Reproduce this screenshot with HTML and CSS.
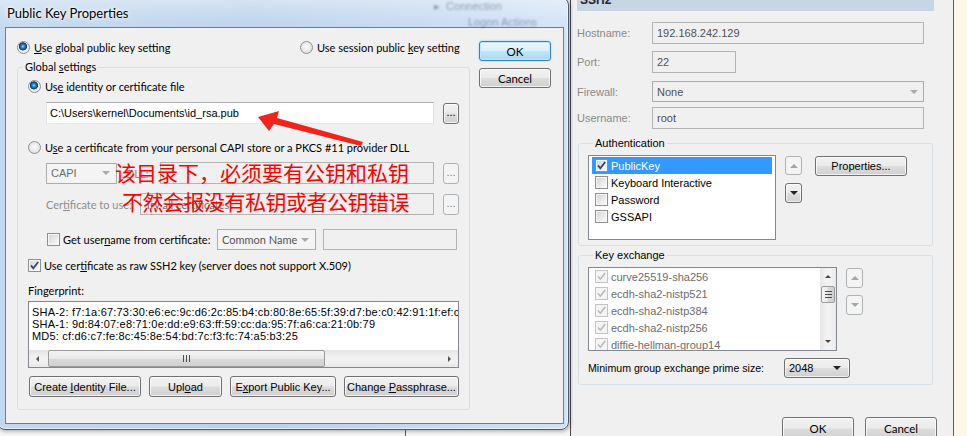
FILE: index.html
```html
<!DOCTYPE html>
<html lang="en">
<head>
<meta charset="utf-8">
<title>Public Key Properties</title>
<link rel="stylesheet" href="styles.css">
</head>
<body>
<div class="desk">
  <div class="backline"></div>

  <section class="bgwin">
    <div class="sechead">SSH2</div>
    <div class="frow r-host"><span class="flabel">Hostname:</span><span class="tf dis w-wide">192.168.242.129</span></div>
    <div class="frow r-port"><span class="flabel">Port:</span><span class="tf dis w-port">22</span></div>
    <div class="frow r-fw"><span class="flabel">Firewall:</span><span class="combo dis w-wide"><span>None</span><i class="tri lt"></i></span></div>
    <div class="frow r-user"><span class="flabel">Username:</span><span class="tf dis w-wide">root</span></div>

    <fieldset class="grp g-auth">
      <legend>Authentication</legend>
      <div class="gbody">
        <ul class="lst l-auth">
          <li class="sel"><span class="cb"><svg viewBox="0 0 11 11"><path d="M2 5.4l2.3 2.8L9.2 2"/></svg></span>PublicKey</li>
          <li><span class="cb"></span>Keyboard Interactive</li>
          <li><span class="cb"></span>Password</li>
          <li><span class="cb"></span>GSSAPI</li>
        </ul>
        <div class="updown ud-auth">
          <span class="ab dis"><i class="tri up"></i></span>
          <span class="ab"><i class="tri"></i></span>
        </div>
        <span class="btn b-props"><span>Properties...</span></span>
      </div>
    </fieldset>

    <fieldset class="grp g-kex">
      <legend>Key exchange</legend>
      <div class="gbody">
        <div class="lst l-kex">
          <ul class="kitems">
            <li><span class="cb dis"><svg viewBox="0 0 11 11"><path d="M2 5.4l2.3 2.8L9.2 2"/></svg></span>curve25519-sha256</li>
            <li><span class="cb dis"><svg viewBox="0 0 11 11"><path d="M2 5.4l2.3 2.8L9.2 2"/></svg></span>ecdh-sha2-nistp521</li>
            <li><span class="cb dis"><svg viewBox="0 0 11 11"><path d="M2 5.4l2.3 2.8L9.2 2"/></svg></span>ecdh-sha2-nistp384</li>
            <li><span class="cb dis"><svg viewBox="0 0 11 11"><path d="M2 5.4l2.3 2.8L9.2 2"/></svg></span>ecdh-sha2-nistp256</li>
            <li><span class="cb dis"><svg viewBox="0 0 11 11"><path d="M2 5.4l2.3 2.8L9.2 2"/></svg></span>diffie-hellman-group14</li>
          </ul>
          <div class="vscroll">
            <span class="varr"><i class="tri up sm"></i></span>
            <span class="vthumb"><i class="grip-h"></i></span>
            <span class="vspace"></span>
            <span class="varr"><i class="tri sm"></i></span>
          </div>
        </div>
        <div class="updown ud-kex">
          <span class="ab dis"><i class="tri up"></i></span>
          <span class="ab dis"><i class="tri"></i></span>
        </div>
      </div>
      <div class="minrow"><span class="minlabel">Minimum group exchange prime size:</span><span class="combo en w-2048"><span>2048</span><i class="tri"></i></span></div>
    </fieldset>

    <div class="winbtns"><span class="btn wb">OK</span><span class="btn wb">Cancel</span></div>
  </section>

  <section class="dlg">
    <div class="behind"><span class="b1">&#9656;&nbsp; Connection</span><span class="b2">Logon Actions</span></div>
    <div class="dtitle">Public Key Properties</div>
    <div class="client">
      <div class="lcol">
        <div class="toprow">
          <label class="opt"><span class="rad on"></span><span><u>U</u>se global public key setting</span></label>
          <label class="opt"><span class="rad"></span><span>Use session public <u>k</u>ey setting</span></label>
        </div>

        <fieldset class="grp gs">
          <legend>Global <u>s</u>ettings</legend>
          <div class="gin">
            <label class="opt r-id"><span class="rad on"></span><span>Us<u>e</u> identity or certificate file</span></label>
            <div class="irow r-file">
              <span class="tf w-file tah">C:\Users\kernel\Documents\id_rsa.pub</span>
              <span class="btn dots">...</span>
            </div>
            <label class="opt r-capi-opt"><span class="rad"></span><span>U<u>s</u>e a certificate from your personal CAPI store or a PKCS #11 provider DLL</span></label>
            <div class="irow r-capi">
              <span class="combo dis w-capi"><span>CAPI</span><i class="tri lt"></i></span>
              <span class="dlabel w-dll">DLL:</span>
              <span class="tf dis w-dllf"></span>
              <span class="btn dots dis">...</span>
            </div>
            <div class="irow r-cert">
              <span class="dlabel w-certl">Cer<u>t</u>ificate to use:</span>
              <span class="tf dis w-certf">Try all certificates</span>
              <span class="btn dots dis">...</span>
            </div>
            <div class="irow r-user2">
              <span class="cb"></span>
              <span class="ulabel">Get user<u>n</u>ame from certificate:</span>
              <span class="combo dis w-cn"><span>Common Name</span><i class="tri lt"></i></span>
              <span class="tf dis w-cnf"></span>
            </div>
            <label class="opt r-raw"><span class="cb"><svg viewBox="0 0 11 11"><path d="M2 5.4l2.3 2.8L9.2 2"/></svg></span><span>Use cer<u>t</u>ificate as raw SSH2 key (server does not support X.509)</span></label>
            <div class="fplabel">Fingerprint:</div>
            <div class="fpbox">
              <div class="fptext tah">
                <div>SHA-2: f7:1a:67:73:30:e6:ec:9c:d6:2c:85:b4:cb:80:8e:65:5f:39:d7:be:c0:42:91:1f:ef:c4:5e:0a:7b</div>
                <div>SHA-1: 9d:84:07:e8:71:0e:dd:e9:63:ff:59:cc:da:95:7f:a6:ca:21:0b:79</div>
                <div>MD5: cf:d6:c7:fe:8c:45:8e:54:bd:7c:f3:fc:74:a5:b3:25</div>
              </div>
              <div class="hscroll">
                <span class="harr"><i class="tri lf"></i></span>
                <span class="hthumb"><i class="grip-v"></i></span>
                <span class="hspace"></span>
                <span class="harr"><i class="tri rt"></i></span>
              </div>
            </div>
            <div class="brow tah">
              <span class="btn b-create"><span>Create <u>I</u>dentity File...</span></span>
              <span class="btn b-upload"><span>Upl<u>o</u>ad</span></span>
              <span class="btn b-export"><span>E<u>x</u>port Public Key...</span></span>
              <span class="btn b-change"><span>Change <u>P</u>assphrase...</span></span>
            </div>
          </div>
        </fieldset>
      </div>

      <div class="rcol">
        <span class="btn def">OK</span>
        <span class="btn">Cancel</span>
      </div>
    </div>
  </section>

  <div class="note">
    <div class="l1">该目录下，必须要有公钥和私钥</div>
    <div class="l2">不然会报没有私钥或者公钥错误</div>
  </div>

  <svg class="arrow" viewBox="0 0 967 436" width="967" height="436">
    <polygon points="258,117 279,111 277,118 363,142 361,146 274,124 269,131" fill="#f2231b"/>
  </svg>
</div>
</body>
</html>
```

FILE: styles.css
```css
* { box-sizing: border-box; margin: 0; padding: 0; }
html, body { width: 967px; height: 436px; overflow: hidden; }
body {
  font-family: "Liberation Sans", Arial, sans-serif;
  font-size: 11px;
  color: #000;
  background: #f6f6f6;
}
ul { list-style: none; }
u { text-decoration: underline; text-underline-offset: 1px; }
label { display: flex; }

.desk {
  position: relative;
  width: 967px;
  height: 436px;
  overflow: hidden;
  background: linear-gradient(90deg, #f6f6f6 0, #f6f6f6 954px, #fdf7e8 954px);
}
.backline { position: absolute; left: 405px; top: 428px; width: 1px; height: 8px; background: #5b5b5b; }

/* ---------- shared controls ---------- */
.tah { font-family: "Liberation Sans", Arial, sans-serif; font-size: 11px; }

.btn {
  display: flex;
  align-items: center;
  justify-content: center;
  border: 1px solid #707070;
  border-radius: 3px;
  background: linear-gradient(180deg, #f2f2f2 0, #ebebeb 48%, #dddddd 52%, #cfcfcf 100%);
  box-shadow: inset 0 0 0 1px rgba(255, 255, 255, .75);
  white-space: nowrap;
  flex: none;
}
.btn.def {
  border-color: #3c7fb1;
  background: linear-gradient(180deg, #eaf6fd 0, #d9f0fc 48%, #bee6fd 52%, #a7d9f5 100%);
  box-shadow: inset 0 0 0 1px #bfe8fb, 0 0 2px #7fc4ef;
}
.btn.dis {
  border-color: #adb2b5;
  background: #f4f4f4;
  box-shadow: none;
  color: #838383;
}

.tf {
  display: flex;
  align-items: center;
  height: 100%;
  padding-left: 4px;
  border: 1px solid #abadb3;
  border-color: #abadb3 #dbdfe6 #e3e9ef #e2e3ea;
  background: #fff;
  white-space: nowrap;
  overflow: hidden;
  flex: none;
}
.tf.dis {
  background: #f0f0f0;
  border: 1px solid #b4b4b4;
  color: #6d6d6d;
}

.combo {
  display: flex;
  align-items: center;
  justify-content: space-between;
  height: 100%;
  padding: 0 6px 0 4px;
  border: 1px solid #acacac;
  background: #f2f2f2;
  color: #555;
  white-space: nowrap;
  flex: none;
}
.combo.en {
  border-color: #707070;
  border-radius: 3px;
  background: linear-gradient(180deg, #f2f2f2 0, #ebebeb 48%, #dddddd 52%, #cfcfcf 100%);
  box-shadow: inset 0 0 0 1px rgba(255, 255, 255, .7);
  color: #000;
  padding: 0 8px 0 4px;
}

.tri {
  display: block;
  width: 0;
  height: 0;
  border-left: 4px solid transparent;
  border-right: 4px solid transparent;
  border-top: 4px solid #222;
}
.tri.up { border-top: 0; border-bottom: 4px solid #3a3a3a; }
.tri.lt { border-top-color: #a8a8a8; }
.tri.sm { border-left-width: 3px; border-right-width: 3px; border-top-width: 3px; }
.tri.sm.up { border-bottom-width: 3px; border-top-width: 0; }
.tri.lf { border: 3px solid transparent; border-left: 0; border-right: 3px solid #555; }
.tri.rt { border: 3px solid transparent; border-right: 0; border-left: 3px solid #555; }

.rad {
  width: 13px;
  height: 13px;
  border-radius: 50%;
  border: 1px solid #8f8f8f;
  background: radial-gradient(circle at 50% 45%, #fbfbfb 0, #e8e8e8 55%, #cdcdcd 100%);
  flex: none;
}
.rad.on {
  background: radial-gradient(circle at 45% 40%, #9edbf8 0, #2d8ad0 1.6px, #124e86 3.2px, #0c3a66 3.8px, #f4f4f4 4.4px, #e2e2e2 100%);
}

.cb {
  width: 13px;
  height: 13px;
  border: 1px solid #8e8f8f;
  background: linear-gradient(135deg, #cfd1d5 0, #ececec 60%, #fbfbfb 100%);
  box-shadow: inset 0 0 0 1px #f7f7f7;
  display: flex;
  align-items: center;
  justify-content: center;
  flex: none;
}
.cb svg { width: 11px; height: 11px; fill: none; stroke: #2c4a78; stroke-width: 1.8; }
.cb.dis { border-color: #c4c4c4; background: #f4f4f4; box-shadow: none; }
.cb.dis svg { stroke: #b3b3b3; stroke-width: 1.4; }

.opt { display: flex; align-items: center; gap: 4px; white-space: nowrap; }

.grp { border: 1px solid #d5dfe5; border-radius: 3px; min-width: 0; }
.grp > legend { margin-left: 5px; padding: 0 2px; height: 14px; line-height: 14px; }

/* ---------- background SecureCRT window ---------- */
.bgwin {
  position: absolute;
  left: 570px;
  top: -10px;
  width: 384px;
  height: 460px;
  background: #f0f0f0;
  border-left: 1px solid #474747;
  border-right: 1px solid #5c5c5c;
  padding-left: 6px;
  display: flex;
  flex-direction: column;
  align-items: flex-start;
}
.sechead {
  width: 357px;
  height: 21px;
  line-height: 21px;
  padding-left: 3px;
  background: #c8d5e2;
  font-weight: bold;
  font-size: 12px;
  color: #1d2a38;
}
.frow { display: flex; align-items: center; }
.flabel { width: 75px; color: #8a8a8a; }
.r-host { margin-top: 11px; height: 22px; }
.r-port { margin-top: 7px; height: 22px; }
.r-fw { margin-top: 8px; height: 21px; }
.r-user { margin-top: 5px; height: 22px; }
.frow .tf.dis { color: #505050; }
.w-wide { width: 272px; }
.w-port { width: 84px; }
.r-fw .combo { background: #f0f0f0; color: #505050; padding-right: 5px; }

.g-auth { margin-top: 7px; margin-left: 1px; width: 355px; padding: 0 0 5px 9px; }
.gbody { display: flex; align-items: flex-start; margin-top: 5px; }
.lst { border: 1px solid #828790; background: #fff; }
.l-auth { width: 188px; height: 85px; padding: 1px 3px 0; }
.l-auth li, .kitems li {
  height: 17px;
  display: flex;
  align-items: center;
  gap: 3px;
  padding-left: 3px;
  white-space: nowrap;
}
.l-auth li.sel { background: #3399ff; color: #fff; }

.updown { margin-left: 9px; margin-top: 1px; display: flex; flex-direction: column; }
.ud-auth { gap: 8px; }
.ud-kex { gap: 7px; }
.ab {
  width: 17px;
  height: 19px;
  display: flex;
  align-items: center;
  justify-content: center;
  border: 1px solid #707070;
  border-radius: 3px;
  background: linear-gradient(180deg, #f2f2f2 0, #ebebeb 48%, #dddddd 52%, #cfcfcf 100%);
  box-shadow: inset 0 0 0 1px rgba(255, 255, 255, .7);
}
.ud-auth .ab + .ab { height: 20px; }
.ud-kex .ab { height: 20px; }
.ab.dis { border-color: #adb2b5; background: #f4f4f4; box-shadow: none; }
.ab.dis .tri.up { border-bottom-color: #a6a6a6; }
.ab.dis .tri { border-top-color: #a6a6a6; }
.b-props { margin-left: 13px; margin-top: 1px; width: 92px; height: 20px; }

.g-kex { margin-top: 2px; margin-left: 1px; width: 355px; padding: 0 0 6px 9px; }
.l-kex { width: 249px; height: 84px; display: flex; overflow: hidden; }
.kitems { flex: 1; overflow: hidden; color: #6d6d6d; }
.kitems li { padding-left: 6px; gap: 3px; }
.vscroll {
  width: 16px;
  display: flex;
  flex-direction: column;
  background: linear-gradient(90deg, #e6e6e6, #f2f2f2 40%, #f2f2f2 70%, #e8e8e8);
}
.varr { height: 17px; display: flex; align-items: center; justify-content: center; flex: none; }
.varr .tri { border-top-color: #444; }
.varr .tri.up { border-bottom-color: #444; }
.vthumb {
  height: 17px;
  margin: 1px 1px 0;
  border: 1px solid #9a9a9a;
  border-radius: 2px;
  background: linear-gradient(90deg, #f3f3f3, #e8e8e8 50%, #d9d9d9 50%, #cfcfcf);
  display: flex;
  align-items: center;
  justify-content: center;
  flex: none;
}
.grip-h {
  display: block;
  width: 7px;
  height: 7px;
  background: repeating-linear-gradient(180deg, #4d4d4d 0, #4d4d4d 1px, transparent 1px, transparent 3px);
}
.vspace { flex: 1; }
.minrow { display: flex; align-items: center; height: 20px; margin-top: 7px; }
.minlabel { width: 196px; white-space: nowrap; font-size: 10.6px; }
.w-2048 { width: 66px; }

.winbtns {
  align-self: stretch;
  margin-top: 32px;
  display: flex;
  justify-content: flex-end;
  gap: 11px;
  padding-right: 16px;
}
.wb { width: 72px; height: 23px; font-size: 11.5px; font-family: Lato, "Liberation Sans", sans-serif; }

/* ---------- Public Key Properties dialog ---------- */
.dlg {
  position: absolute;
  left: -3px;
  top: -3px;
  width: 572px;
  height: 433px;
  display: flex;
  flex-direction: column;
  border: 1px solid #485a6f;
  border-radius: 0 8px 8px 8px;
  background:
    linear-gradient(180deg, rgba(255, 255, 255, .42) 0, rgba(255, 255, 255, .12) 22px, rgba(255, 255, 255, 0) 40px),
    linear-gradient(90deg, #c3d8ef 0, #bad1eb 45%, #c5d9f0 75%, #d2e3f6 100%);
  box-shadow: inset 0 0 0 1px rgba(255, 255, 255, .55), 1px 1px 4px rgba(0, 0, 0, .35);
  font-family: Lato, "Liberation Sans", sans-serif;
  font-size: 11px;
}
.behind {
  position: absolute;
  left: 436px;
  top: 0;
  width: 130px;
  height: 30px;
  font-family: "Liberation Sans", Arial, sans-serif;
  font-size: 11px;
  color: rgba(50, 70, 100, .45);
  filter: blur(1.2px);
  display: flex;
  flex-direction: column;
}
.b1 { line-height: 14px; margin-top: 1px; }
.b2 { line-height: 14px; margin-top: 2px; padding-left: 34px; }
.dtitle {
  position: relative;
  height: 29px;
  padding: 8px 0 0 9px;
  line-height: 15px;
  font-size: 13px;
  text-shadow: 0 0 6px #fff, 0 0 3px #fff;
}
.client {
  flex: 1;
  margin: 0 4px 5px 7px;
  border: 1px solid #6d7e92;
  background: #f0f0f0;
  display: flex;
  padding: 13px 0 0 11px;
}
.lcol { width: 453px; flex: none; display: flex; flex-direction: column; }
.toprow { display: grid; grid-template-columns: 283px auto; height: 13px; align-items: center; }
.gs { margin-top: 6px; }
.gin { display: flex; flex-direction: column; padding: 0 10px 12px 10px; }

.r-id { margin-top: 5px; height: 14px; }
.irow { display: flex; align-items: center; }
.r-file { margin-top: 9px; height: 22px; padding-left: 18px; }
.w-file { width: 388px; padding-left: 3px; }
.dots { margin-left: 9px; width: 16px; height: 21px; font-size: 11px; font-family: "Liberation Sans", Arial, sans-serif; padding-bottom: 3px; }
.r-capi-opt { margin-top: 16px; height: 14px; }
.r-capi { margin-top: 8px; height: 22px; padding-left: 18px; }
.w-capi { width: 71px; height: 21px; font-family: "Liberation Sans", Arial, sans-serif; font-size: 11px; color: #6d6d6d; background: #f4f4f4; }
.dlabel { color: #8d8d8d; white-space: nowrap; }
.w-dll { width: 43px; padding-left: 9px; }
.w-dllf { width: 274px; }
.r-cert { margin-top: 9px; height: 22px; padding-left: 18px; }
.w-certl { width: 94px; }
.w-certf { width: 294px; padding-left: 4px; color: #8d8d8d; }
.r-user2 { margin-top: 14px; height: 21px; padding-left: 19px; }
.ulabel { width: 157px; padding-left: 3px; white-space: nowrap; }
.w-cn { width: 99px; height: 21px; background: #f4f4f4; color: #555; font-size: 11px; }
.w-cnf { width: 134px; margin-left: 7px; }
.r-raw { margin-top: 8px; height: 14px; gap: 3px; }
.fplabel { margin-top: 12px; height: 14px; line-height: 14px; }
.fpbox {
  margin-top: 3px;
  height: 67px;
  border: 1px solid #828790;
  background: #fff;
  display: flex;
  flex-direction: column;
}
.fptext { flex: 1; padding: 4px 0 0 3px; line-height: 12px; letter-spacing: 0.2px; white-space: nowrap; overflow: hidden; }
.hscroll {
  height: 17px;
  display: flex;
  background: linear-gradient(180deg, #e4e4e4, #f1f1f1 40%, #f1f1f1 70%, #e7e7e7);
}
.harr { width: 17px; display: flex; align-items: center; justify-content: center; flex: none; }
.hthumb {
  margin: 0 0 0 2px;
  width: 277px;
  border: 1px solid #9b9b9b;
  border-radius: 2px;
  background: linear-gradient(180deg, #f3f3f3, #e9e9e9 50%, #dadada 50%, #d0d0d0);
  display: flex;
  align-items: center;
  justify-content: center;
  flex: none;
}
.grip-v {
  display: block;
  width: 7px;
  height: 7px;
  background: repeating-linear-gradient(90deg, #4d4d4d 0, #4d4d4d 1px, transparent 1px, transparent 3px);
}
.hspace { flex: 1; }
.brow { margin-top: 8px; height: 21px; display: flex; gap: 8px; padding-left: 1px; }
.b-create { width: 112px; }
.b-upload { width: 73px; }
.b-export { width: 106px; }
.b-change { width: 115px; }

.rcol { margin-left: 9px; width: 72px; display: flex; flex-direction: column; gap: 7px; }
.rcol .btn { height: 20px; font-size: 11.5px; }

/* ---------- red annotation ---------- */
.note {
  position: absolute;
  left: 115px;
  top: 158px;
  color: #ff0000;
  font-family: "Noto Sans CJK SC", sans-serif;
  font-size: 21px;
  line-height: 29px;
  white-space: nowrap;
}
.note .l2 { padding-left: 7px; letter-spacing: -0.5px; }
.arrow { position: absolute; left: 0; top: 0; pointer-events: none; }
```
